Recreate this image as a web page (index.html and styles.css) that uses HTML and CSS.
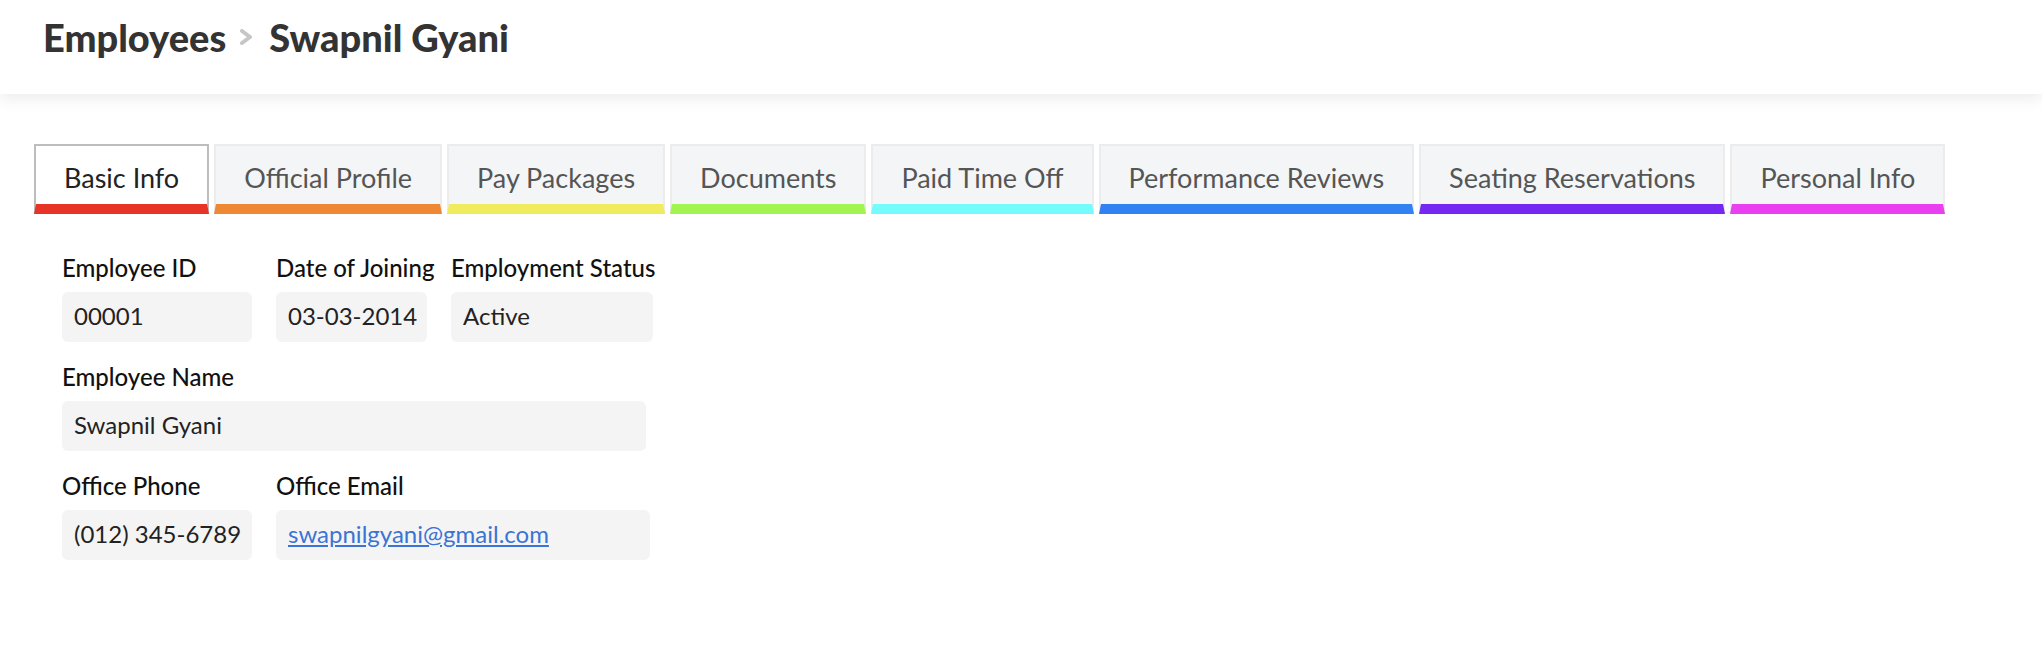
FILE: index.html
```html
<!DOCTYPE html>
<html lang="en">
<head>
  <meta charset="UTF-8" />
  <meta name="viewport" content="width=device-width, initial-scale=1.0"/>
  <title>Swapnil Gyani - Employees</title>
  <link rel="stylesheet" href="styles.css">
</head>
<body>
  <header class="page-header">
    <h1 class="crumbs">
      <span>Employees</span>
      <svg class="crumb-sep" width="14" height="16" viewBox="0 0 14 16">
        <polyline points="3,2 11,8 3,14" fill="none" stroke="#c6c6c6" stroke-width="4" stroke-linejoin="round" stroke-linecap="round"/>
      </svg>
      <span>Swapnil Gyani</span>
    </h1>
  </header>

  <main class="content">
    <nav class="tabs">
      <div class="tab active red">Basic Info</div>
      <div class="tab orange">Official Profile</div>
      <div class="tab yellow">Pay Packages</div>
      <div class="tab green">Documents</div>
      <div class="tab cyan">Paid Time Off</div>
      <div class="tab blue">Performance Reviews</div>
      <div class="tab purple">Seating Reservations</div>
      <div class="tab pink">Personal Info</div>
    </nav>

    <section class="basic-info">
      <div class="row">
        <div class="field w-id">
          <label>Employee ID</label>
          <div class="value">00001</div>
        </div>
        <div class="field w-date">
          <label>Date of Joining</label>
          <div class="value">03-03-2014</div>
        </div>
        <div class="field w-status">
          <label>Employment Status</label>
          <div class="value">Active</div>
        </div>
      </div>

      <div class="row">
        <div class="field w-name">
          <label>Employee Name</label>
          <div class="value">Swapnil Gyani</div>
        </div>
      </div>

      <div class="row">
        <div class="field w-id">
          <label>Office Phone</label>
          <div class="value">(012) 345-6789</div>
        </div>
        <div class="field w-email">
          <label>Office Email</label>
          <div class="value"><a href="#">swapnilgyani@gmail.com</a></div>
        </div>
      </div>
    </section>
  </main>
</body>
</html>
```

FILE: styles.css
```css
body {
  margin: 0;
  padding: 0;
  font-family: 'Lato', 'Noto Sans', sans-serif;
  background: #fff;
  color: #222;
}

.page-header {
  height: 94px;
  box-sizing: border-box;
  padding: 14px 43px 0;
  background: #fff;
  box-shadow: 0 6px 14px rgba(0, 0, 0, 0.07);
}

.crumbs {
  margin: 0;
  display: flex;
  align-items: center;
  font-size: 38px;
  font-weight: 900;
  color: #333;
  line-height: 46px;
}

.crumb-sep {
  margin: 0 16px 0 13px;
}

.content {
  padding: 50px 34px 0;
}

.tabs {
  display: flex;
  gap: 5px;
}

.tab {
  padding: 15px 28px 10px;
  font-size: 27px;
  color: #555;
  background: #f4f5f7;
  border: 2px solid #ececec;
  border-bottom: 10px solid;
  white-space: nowrap;
  cursor: pointer;
}

.tab.active {
  background: #fff;
  color: #222;
  border-color: #bdbdbd;
}

.tab.red { border-bottom-color: #e83426; }
.tab.orange { border-bottom-color: #ef8834; }
.tab.yellow { border-bottom-color: #f1ec5d; }
.tab.green { border-bottom-color: #a1f54f; }
.tab.cyan { border-bottom-color: #74fbfb; }
.tab.blue { border-bottom-color: #3281f2; }
.tab.purple { border-bottom-color: #7628f3; }
.tab.pink { border-bottom-color: #ea3ef1; }

.basic-info {
  padding: 39px 0 0 28px;
}

.row {
  display: flex;
  gap: 24px;
  margin-bottom: 20px;
}

.field label {
  display: block;
  font-size: 24px;
  font-weight: 500;
  color: #111;
  margin-bottom: 10px;
  white-space: nowrap;
}

.value {
  box-sizing: border-box;
  height: 50px;
  padding: 9px 12px 11px;
  font-size: 24px;
  line-height: 30px;
  background: #f4f4f4;
  border-radius: 6px;
  white-space: nowrap;
}

.value a {
  color: #3b74d4;
}

.w-id { width: 190px; }
.w-date { width: 151px; }
.w-status { width: 202px; }
.w-name { width: 584px; }
.w-email { width: 374px; }
```
